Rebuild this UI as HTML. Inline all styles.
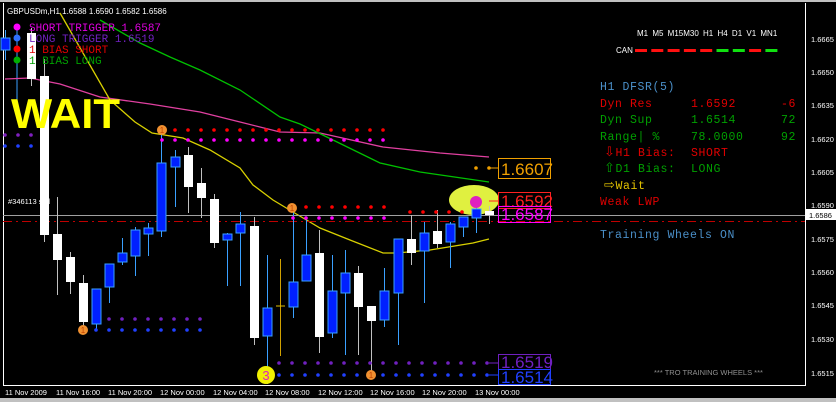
<!DOCTYPE html>
<html><head><meta charset="utf-8"><style>
html,body{margin:0;padding:0;background:#000;width:836px;height:402px;overflow:hidden}
svg{display:block}
.m{font-family:"Liberation Mono",monospace}
.s{font-family:"Liberation Sans",sans-serif}
.a{font-family:"DejaVu Sans",sans-serif;font-size:13px}
</style></head><body>
<svg id="c" width="836" height="402" viewBox="0 0 836 402" xmlns="http://www.w3.org/2000/svg">
<rect width="836" height="402" fill="#000"/>
<rect x="0" y="0" width="836" height="2" fill="#c0c0c0"/>
<line x1="3.5" y1="3" x2="3.5" y2="386" stroke="#fff"/>
<line x1="805.5" y1="3" x2="805.5" y2="386" stroke="#fff"/>
<line x1="3" y1="385.5" x2="806" y2="385.5" stroke="#fff"/>
<rect x="0" y="398" width="836" height="4" fill="#c0c0c0"/>
<line x1="17" y1="30" x2="17" y2="120" stroke="#3aa0ff"/>
<polyline fill="none" stroke="#e040a0" stroke-width="1.3" points="5,79 30,78 60,84 100,97 150,104 200,112 240,122 280,132 320,133 383,147 440,153 489,157"/>
<polyline fill="none" stroke="#00c000" stroke-width="1.3" points="100,20 140,43 170,57 200,70 240,90 280,117 300,124 333,140 380,163 420,172 489,182"/>
<polyline fill="none" stroke="#d8d000" stroke-width="1.3" points="60,13 87,60 110,100 135,122 152,133 183,138 210,150 240,168 253,185 273,200 293,212 320,228 350,240 383,253 397,253 430,250 473,243 489,239"/>
<line x1="3" y1="215.5" x2="805" y2="215.5" stroke="#a0a0a0"/>
<line x1="3" y1="221.5" x2="805" y2="221.5" stroke="#c00000" stroke-dasharray="9,4,2,4"/>
<ellipse cx="474" cy="200" rx="25" ry="15" fill="#e0f040"/>
<g id="cand"></g>
<g id="dots"></g>
<circle cx="476" cy="202" r="6" fill="#e020c0"/>
<circle cx="162" cy="130" r="5" fill="#f09030"/><text x="162" y="133" font-size="8" fill="#c04000" text-anchor="middle" class="s">1</text>
<circle cx="83" cy="330" r="5" fill="#f09030"/><text x="83" y="333" font-size="8" fill="#c04000" text-anchor="middle" class="s">1</text>
<circle cx="292" cy="208" r="5" fill="#f09030"/><text x="292" y="211" font-size="8" fill="#c04000" text-anchor="middle" class="s">1</text>
<circle cx="371" cy="375" r="5" fill="#f09030"/><text x="371" y="378" font-size="8" fill="#c04000" text-anchor="middle" class="s">1</text>
<circle cx="266" cy="375" r="9" fill="#f0f000"/><text x="266" y="380" font-size="13" fill="#e020c0" text-anchor="middle" class="s">3</text>
<line x1="489" y1="168" x2="498" y2="168" stroke="#f0a000"/>
<rect x="498.5" y="158.5" width="52" height="20" fill="none" stroke="#f0a000"/>
<text x="501" y="175" font-size="17" fill="#f0a000" class="s">1.6607</text>
<line x1="489" y1="201" x2="498" y2="201" stroke="#ff2020"/>
<rect x="498.5" y="192.5" width="52" height="16" fill="none" stroke="#ff2020"/>
<text x="501" y="207" font-size="17" fill="#ff2020" class="s">1.6592</text>
<rect x="498.5" y="206.5" width="52" height="16" fill="none" stroke="#ff00ff"/>
<text x="501" y="220" font-size="17" fill="#ff00ff" class="s">1.6587</text>
<line x1="489" y1="363" x2="498" y2="363" stroke="#7020c0"/>
<rect x="498.5" y="354.5" width="52" height="15" fill="none" stroke="#7020c0"/>
<text x="501" y="368" font-size="17" fill="#7020c0" class="s">1.6519</text>
<line x1="489" y1="375" x2="498" y2="375" stroke="#2040ff"/>
<rect x="498.5" y="369.5" width="52" height="15" fill="none" stroke="#2040ff"/>
<text x="501" y="383" font-size="17" fill="#2040ff" class="s">1.6514</text>
<text x="7" y="14" font-size="8" fill="#fff" class="s">GBPUSDm,H1  1.6588 1.6590 1.6582 1.6586</text>
<circle cx="17" cy="27" r="3.5" fill="#ff00ff"/><text x="29" y="31" font-size="11" fill="#e000e0" class="m">SHORT TRIGGER 1.6587</text>
<circle cx="17" cy="38" r="3.5" fill="#3070ff"/><text x="29" y="42" font-size="11" fill="#7020c0" class="m">LONG TRIGGER  1.6519</text>
<circle cx="17" cy="49" r="3.5" fill="#ff0000"/><text x="29" y="53" font-size="11" fill="#e00000" class="m">1 BIAS SHORT</text>
<circle cx="17" cy="60" r="3.5" fill="#00b000"/><text x="29" y="64" font-size="11" fill="#00a000" class="m">1 BIAS LONG</text>
<text x="11" y="128" font-size="42" font-weight="bold" fill="#ffff00" class="s" textLength="109" lengthAdjust="spacingAndGlyphs">WAIT</text>
<text x="8" y="204" font-size="7.5" fill="#fff" class="s">#346113 sell</text>
<text x="637" y="36" font-size="8" fill="#fff" class="s" word-spacing="2">M1 M5 M15M30 H1 H4 D1 V1 MN1</text>
<text x="616" y="53" font-size="8" fill="#fff" class="s">CAN</text>
<g id="can"></g>
<g class="m" font-size="11.5" letter-spacing="0.6">
<text x="600" y="90" fill="#4a8fc8">H1 DFSR(5)</text>
<text x="600" y="107" fill="#e00000">Dyn Res</text><text x="691" y="107" fill="#e00000">1.6592</text><text x="796" y="107" fill="#e00000" text-anchor="end">-6</text>
<text x="600" y="123" fill="#00a000">Dyn Sup</text><text x="691" y="123" fill="#00a000">1.6514</text><text x="796" y="123" fill="#00a000" text-anchor="end">72</text>
<text x="600" y="140" fill="#00a000">Range| %</text><text x="691" y="140" fill="#00a000">78.0000</text><text x="796" y="140" fill="#00a000" text-anchor="end">92</text>
<text x="604" y="156" fill="#e00000"><tspan class="a">⇩</tspan>H1 Bias:</text><text x="691" y="156" fill="#e00000">SHORT</text>
<text x="604" y="172" fill="#00a000"><tspan class="a">⇧</tspan>D1 Bias:</text><text x="691" y="172" fill="#00a000">LONG</text>
<text x="604" y="189" fill="#e0c000"><tspan class="a">⇨</tspan>Wait</text>
<text x="600" y="205" fill="#e00000">Weak LWP</text>
<text x="600" y="238" fill="#4a8fc8">Training Wheels ON</text>
</g>
<text x="654" y="375" font-size="7.5" fill="#909090" class="s">*** TRO TRAINING WHEELS ***</text>
<g class="s" font-size="7.5" fill="#fff">
<text x="811" y="42">1.6665</text><text x="811" y="75">1.6650</text><text x="811" y="108">1.6635</text><text x="811" y="142">1.6620</text><text x="811" y="175">1.6605</text><text x="811" y="208">1.6590</text><text x="811" y="242">1.6575</text><text x="811" y="275">1.6560</text><text x="811" y="308">1.6545</text><text x="811" y="342">1.6530</text><text x="811" y="376">1.6515</text>
</g>
<rect x="806" y="209" width="30" height="11" fill="#fff"/>
<text x="809" y="218" font-size="7.5" fill="#000" class="s">1.6586</text>
<g class="s" font-size="7.5" fill="#fff">
<text x="5" y="395">11 Nov 2009</text><text x="56" y="395">11 Nov 16:00</text><text x="108" y="395">11 Nov 20:00</text><text x="160" y="395">12 Nov 00:00</text><text x="213" y="395">12 Nov 04:00</text><text x="265" y="395">12 Nov 08:00</text><text x="318" y="395">12 Nov 12:00</text><text x="370" y="395">12 Nov 16:00</text><text x="422" y="395">12 Nov 20:00</text><text x="475" y="395">13 Nov 00:00</text>
</g>
</svg>
<script>
var NS="http://www.w3.org/2000/svg";
function el(p,t,a){var e=document.createElementNS(NS,t);for(var k in a)e.setAttribute(k,a[k]);document.getElementById(p).appendChild(e);}
var C=[[5,38,50,30,60,'b'],[31,33,79,28,86,'w'],[44,76,235,59,242,'w'],[57,234,260,197,295,'w'],[70,257,282,252,294,'w'],[83,283,322,275,330,'w'],[96,289,324,289,330,'b'],[109,264,287,264,303,'b'],[122,253,262,238,265,'b'],[135,230,256,227,276,'b'],[148,228,234,223,256,'b'],[161,163,231,130,237,'b'],[175,157,167,150,207,'b'],[188,155,187,147,213,'w'],[201,183,198,168,218,'w'],[214,199,243,194,248,'w'],[227,234,240,233,286,'b'],[240,224,233,212,286,'b'],[254,226,338,217,345,'w'],[267,308,336,255,384,'b'],[293,282,307,207,318,'b'],[306,255,281,220,281,'b'],[319,253,337,230,353,'w'],[332,291,333,255,338,'b'],[345,273,293,250,355,'b'],[358,273,307,266,355,'w'],[371,306,321,306,377,'w'],[384,291,320,268,327,'b'],[398,239,293,239,345,'b'],[411,239,253,215,265,'w'],[424,233,251,222,303,'b'],[437,231,244,210,248,'w'],[450,224,242,222,268,'b'],[463,217,227,217,237,'b'],[476,209,218,203,233,'b'],[489,211,215,206,224,'w']];
C.forEach(function(c){var b=c[5]=='b';el('cand','line',{x1:c[0]+.5,x2:c[0]+.5,y1:c[3],y2:c[4],stroke:b?'#3aa0ff':'#c0c0c0'});
el('cand','rect',{x:c[0]-4,y:c[1],width:9,height:Math.max(2,c[2]-c[1]),fill:b?'#0020ff':'#fff',stroke:b?'#3aa0ff':'none'});});
el('cand','line',{x1:280.5,x2:280.5,y1:259,y2:356,stroke:'#d0a000'});el('cand','line',{x1:276,x2:285,y1:306,y2:306,stroke:'#e0c000'});
function row(x0,x1,y,col){for(var x=x0;x<=x1;x+=13)el('dots','circle',{cx:x,cy:y,r:1.8,fill:col});}
row(5,31,135,'#8020c0');row(5,31,146,'#2040ff');
row(175,385,130,'#ff0000');row(162,385,140,'#ff00ff');
row(109,200,319,'#7020c0');row(96,200,330,'#2040ff');
row(306,385,207,'#ff0000');row(293,385,218,'#ff00ff');
row(410,463,212,'#ff0000');
row(279,489,363,'#7020c0');row(279,489,375,'#2040ff');
row(476,489,168,'#f0a000');
var cc=['#ff1010','#ff1010','#ff1010','#ff1010','#ff1010','#10e010','#10e010','#ff1010','#10e010'];
cc.forEach(function(c,i){el('can','rect',{x:635+i*16.3,y:49,width:12,height:3,fill:c});});
</script>
</body></html>
